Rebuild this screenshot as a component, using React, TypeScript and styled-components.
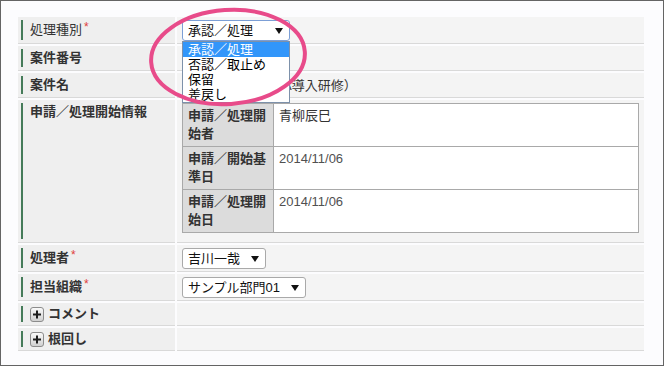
import styled, { createGlobalStyle } from "styled-components";

const GlobalStyle = createGlobalStyle`
	body {
		margin: 0;
		background: #fff;
		font-family: "Liberation Sans", "Noto Sans CJK JP", sans-serif;
		font-size: 13px;
		color: #333;
	}
`;

const Frame = styled.div`
	position: relative;
	box-sizing: border-box;
	width: 664px;
	height: 366px;
	border: 1px solid #646464;
	background: #fcfcfe;
	padding: 16px 19px 0 17px;
`;

const FormGrid = styled.div`
	display: grid;
	grid-template-columns: 157px 1fr;
	column-gap: 2px;
	row-gap: 2px;
`;

const LabelCell = styled.div`
	display: flex;
	background: #efefef;
	border-bottom: 1px solid #d9d9d9;
	padding: 3px 0 3px 3px;
`;

const LabelBar = styled.div<{ $top?: boolean; $light?: boolean; $compact?: boolean }>`
	flex: 1;
	display: flex;
	align-items: ${(p) => (p.$top ? "flex-start" : "center")};
	gap: 4px;
	border-left: 2px solid #457b59;
	padding: ${(p) => (p.$compact ? "0" : "1px")} 0 ${(p) => (p.$compact ? "0" : "1px")} 7px;
	font-weight: ${(p) => (p.$light ? 400 : 700)};
	line-height: 16px;
	color: #333;
`;

const Required = styled.span`
	color: #e0413b;
	font-size: 12px;
	font-weight: 400;
	position: relative;
	top: -3px;
	margin-left: -2px;
`;

const ValueCell = styled.div<{ $top?: boolean }>`
	display: flex;
	align-items: ${(p) => (p.$top ? "flex-start" : "center")};
	background: #f4f4f4;
	border-bottom: 1px solid #d9d9d9;
	padding: 3px 5px 2px;
	line-height: 16px;
	color: #333;
`;

const SelectWrap = styled.div`
	position: relative;
`;

const SelectBox = styled.div<{ $focused?: boolean; $width?: number }>`
	box-sizing: border-box;
	display: flex;
	align-items: center;
	justify-content: space-between;
	gap: 11px;
	height: 21px;
	width: ${(p) => (p.$width ? `${p.$width}px` : "auto")};
	padding: 0 6px 0 5px;
	background: #fff;
	border: 1px solid ${(p) => (p.$focused ? "#7c9fd6" : "#a9a9a9")};
	border-radius: 3px;
	color: #111;
	line-height: 16px;
	white-space: nowrap;
`;

const Arrow = styled.span`
	width: 0;
	height: 0;
	border-left: 4px solid transparent;
	border-right: 4px solid transparent;
	border-top: 6px solid #111;
`;

const OptionList = styled.div`
	position: absolute;
	top: 100%;
	left: 0;
	width: 100%;
	box-sizing: border-box;
	border: 1px solid #7d91aa;
	background: #fff;
	z-index: 2;
`;

const Option = styled.div<{ $selected?: boolean }>`
	padding-left: 5px;
	line-height: 15px;
	white-space: nowrap;
	color: ${(p) => (p.$selected ? "#fff" : "#000")};
	background: ${(p) => (p.$selected ? "#3296fa" : "transparent")};
`;

const InfoTable = styled.table`
	width: 100%;
	border-collapse: collapse;
	margin: 0 0 7px;
	th,
	td {
		border: 1px solid #a9a9a9;
		padding: 3px 5px;
		line-height: 18px;
		vertical-align: top;
		text-align: left;
	}
	th {
		width: 80px;
		background: #dcdcdc;
		font-weight: 700;
		color: #333;
	}
	td {
		background: #fff;
		color: #333;
	}
`;

const DateText = styled.span`
	color: #505050;
`;

const ToggleIcon = styled.svg`
	flex: none;
	display: block;
`;

const Annotation = styled.svg`
	position: absolute;
	left: -1px;
	top: -1px;
	pointer-events: none;
	z-index: 3;
`;

function PlusIcon() {
	return (
		<ToggleIcon width="14" height="15" viewBox="0 0 14 15">
			<defs>
				<linearGradient id="plusBg" x1="0" y1="0" x2="0" y2="1">
					<stop offset="0" stopColor="#fbfbfb" />
					<stop offset="1" stopColor="#cfcfcf" />
				</linearGradient>
			</defs>
			<rect x="0.5" y="0.5" width="13" height="14" rx="2.5" fill="url(#plusBg)" stroke="#8c8c8c" />
			<rect x="3" y="6.5" width="8" height="2" fill="#1e1e1e" />
			<rect x="6" y="3.5" width="2" height="8" fill="#1e1e1e" />
		</ToggleIcon>
	);
}

const options = ["承認／処理", "否認／取止め", "保留", "差戻し"];

const info = [
	{ label: "申請／処理開始者", value: "青柳辰巳", date: false },
	{ label: "申請／開始基準日", value: "2014/11/06", date: true },
	{ label: "申請／処理開始日", value: "2014/11/06", date: true },
];

export default function App() {
	return (
		<>
			<GlobalStyle />
			<Frame>
				<FormGrid>
					<LabelCell>
						<LabelBar $light>
							処理種別<Required>*</Required>
						</LabelBar>
					</LabelCell>
					<ValueCell>
						<SelectWrap>
							<SelectBox $focused $width={108}>
								承認／処理
								<Arrow />
							</SelectBox>
							<OptionList>
								{options.map((o, i) => (
									<Option key={o} $selected={i === 0}>
										{o}
									</Option>
								))}
							</OptionList>
						</SelectWrap>
					</ValueCell>

					<LabelCell>
						<LabelBar>案件番号</LabelBar>
					</LabelCell>
					<ValueCell />

					<LabelCell>
						<LabelBar>案件名</LabelBar>
					</LabelCell>
					<ValueCell>新入社員研修（OA導入研修）</ValueCell>

					<LabelCell>
						<LabelBar $top>申請／処理開始情報</LabelBar>
					</LabelCell>
					<ValueCell $top>
						<InfoTable>
							<tbody>
								{info.map((row) => (
									<tr key={row.label}>
										<th>{row.label}</th>
										<td>{row.date ? <DateText>{row.value}</DateText> : row.value}</td>
									</tr>
								))}
							</tbody>
						</InfoTable>
					</ValueCell>

					<LabelCell>
						<LabelBar>
							処理者<Required>*</Required>
						</LabelBar>
					</LabelCell>
					<ValueCell>
						<SelectBox>
							吉川一哉
							<Arrow />
						</SelectBox>
					</ValueCell>

					<LabelCell>
						<LabelBar>
							担当組織<Required>*</Required>
						</LabelBar>
					</LabelCell>
					<ValueCell>
						<SelectBox>
							サンプル部門01
							<Arrow />
						</SelectBox>
					</ValueCell>

					<LabelCell>
						<LabelBar $compact>
							<PlusIcon />
							コメント
						</LabelBar>
					</LabelCell>
					<ValueCell />

					<LabelCell>
						<LabelBar $compact>
							<PlusIcon />
							根回し
						</LabelBar>
					</LabelCell>
					<ValueCell />
				</FormGrid>

				<Annotation width="664" height="366" viewBox="0 0 664 366">
					<ellipse
						cx="228"
						cy="57"
						rx="77"
						ry="47"
						transform="rotate(-4 228 57)"
						fill="none"
						stroke="#e84b8a"
						strokeWidth="4"
					/>
				</Annotation>
			</Frame>
		</>
	);
}
